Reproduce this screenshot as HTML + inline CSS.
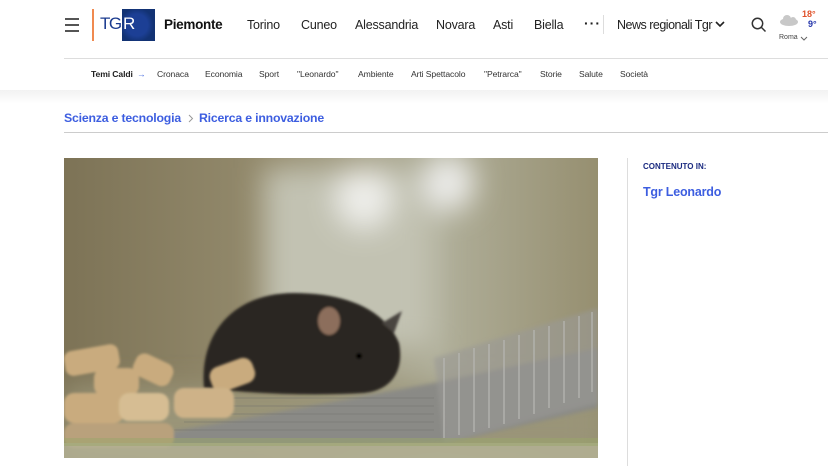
<!DOCTYPE html>
<html><head><meta charset="utf-8"><style>
*{margin:0;padding:0;box-sizing:border-box}
body{width:828px;height:466px;overflow:hidden;background:#fff;font-family:"Liberation Sans",sans-serif;position:relative;color:#1f1f1f}
.a{position:absolute;white-space:nowrap}
.nav{font-size:12.5px;top:18px;color:#222;letter-spacing:-0.2px}
.sub{font-size:8.6px;top:69px;color:#333;letter-spacing:-0.1px}
</style></head><body>
<div class="a" style="left:65px;top:18px;width:14px;height:2px;background:#555"></div>
<div class="a" style="left:65px;top:24px;width:14px;height:2px;background:#555"></div>
<div class="a" style="left:65px;top:30px;width:14px;height:2px;background:#555"></div>
<div class="a" style="left:92px;top:9px;width:2px;height:32px;background:#f08a50"></div>
<div class="a" style="left:100px;top:14px;font-size:17px;color:#1b3b8f;letter-spacing:-1.5px">TG</div>
<div class="a" style="left:122px;top:9px;width:33px;height:32px;background:radial-gradient(circle at 45% 50%,#1c3f95 0,#1c3f95 45%,#123273 70%)"></div>
<div class="a" style="left:123px;top:14px;font-size:17px;color:#fff">R</div>
<div class="a" style="left:164px;top:17px;font-size:13.5px;font-weight:bold;color:#111;letter-spacing:-0.3px">Piemonte</div>
<div class="a nav" style="left:247px">Torino</div>
<div class="a nav" style="left:301px">Cuneo</div>
<div class="a nav" style="left:355px">Alessandria</div>
<div class="a nav" style="left:436px">Novara</div>
<div class="a nav" style="left:493px">Asti</div>
<div class="a nav" style="left:534px">Biella</div>
<div class="a" style="left:584px;top:15px;font-size:14px;font-weight:bold;letter-spacing:1px">···</div>
<div class="a" style="left:603px;top:15px;width:1px;height:19px;background:#ddd"></div>
<div class="a nav" style="left:617px;letter-spacing:-0.5px">News regionali Tgr</div>
<svg class="a" style="left:715px;top:21px" width="10" height="7"><path d="M1 1l4 4 4-4" stroke="#222" stroke-width="1.6" fill="none"/></svg>
<svg class="a" style="left:751px;top:17px" width="16" height="16"><circle cx="6.5" cy="6.5" r="5.2" stroke="#333" stroke-width="1.5" fill="none"/><path d="M10.5 10.5l4 4" stroke="#333" stroke-width="1.5"/></svg>
<svg class="a" style="left:778px;top:13px" width="22" height="14"><ellipse cx="11" cy="9" rx="9" ry="4" fill="#c8c8c8"/><circle cx="9" cy="6" r="4" fill="#c8c8c8"/><circle cx="15" cy="7" r="3" fill="#c8c8c8"/></svg>
<div class="a" style="left:802px;top:9px;font-size:9px;font-weight:bold;color:#e0522a">18°</div>
<div class="a" style="left:808px;top:19px;font-size:9px;font-weight:bold;color:#2233aa">9°</div>
<div class="a" style="left:779px;top:34px;font-size:7px;color:#444">Roma</div>
<svg class="a" style="left:800px;top:36px" width="8" height="5"><path d="M1 1l3 3 3-3" stroke="#666" fill="none"/></svg>
<div class="a" style="left:64px;top:58px;width:764px;height:1px;background:#ddd"></div>
<div class="a sub" style="left:91px;font-weight:bold;color:#222">Temi Caldi</div>
<div class="a sub" style="left:137px;color:#4a6ee0">→</div>
<div class="a sub" style="left:157px">Cronaca</div>
<div class="a sub" style="left:205px">Economia</div>
<div class="a sub" style="left:259px">Sport</div>
<div class="a sub" style="left:297px">"Leonardo"</div>
<div class="a sub" style="left:358px">Ambiente</div>
<div class="a sub" style="left:411px">Arti Spettacolo</div>
<div class="a sub" style="left:484px">"Petrarca"</div>
<div class="a sub" style="left:540px">Storie</div>
<div class="a sub" style="left:579px">Salute</div>
<div class="a sub" style="left:620px">Società</div>
<div class="a" style="left:0;top:90px;width:828px;height:14px;background:linear-gradient(#f2f2f2,#fff)"></div>
<div class="a" style="left:64px;top:111px;font-size:12.3px;font-weight:bold;color:#3d5ee0;letter-spacing:-0.2px">Scienza e tecnologia</div>
<svg class="a" style="left:188px;top:114px" width="6" height="9"><path d="M1 1l3.5 3.5L1 8" stroke="#999" fill="none"/></svg>
<div class="a" style="left:199px;top:111px;font-size:12.3px;font-weight:bold;color:#3d5ee0;letter-spacing:-0.2px">Ricerca e innovazione</div>
<div class="a" style="left:64px;top:132px;width:764px;height:1px;background:#ccc"></div>
<svg class="a" style="left:64px;top:158px" width="534" height="300" viewBox="0 0 534 300">
<defs>
<filter id="b" x="-20%" y="-20%" width="140%" height="140%"><feGaussianBlur stdDeviation="14"/></filter>
<filter id="s"><feGaussianBlur stdDeviation="2"/></filter>
<filter id="m"><feGaussianBlur stdDeviation="1.2"/></filter>
<linearGradient id="bg" x1="0" x2="1"><stop offset="0" stop-color="#7d7356"/><stop offset="0.4" stop-color="#958c6e"/><stop offset="0.7" stop-color="#b0af9a"/><stop offset="1" stop-color="#968f70"/></linearGradient>
</defs>
<rect width="534" height="300" fill="url(#bg)"/>
<g filter="url(#b)">
<rect x="200" y="10" width="170" height="180" fill="#c2c2b2"/>
<ellipse cx="300" cy="40" rx="28" ry="30" fill="#eeeeea"/>
<ellipse cx="385" cy="25" rx="25" ry="28" fill="#ececea"/>
<rect x="0" y="230" width="534" height="70" fill="#9a9478"/>
</g>
<polygon points="100,275 370,225 534,190 534,250 380,285 110,290" fill="#8a8a86" filter="url(#s)"/>
<polygon points="370,200 534,150 534,245 380,285" fill="#9a9995" opacity="0.6" filter="url(#s)"/>
<g stroke="#b8b8b4" stroke-width="1.5" opacity="0.8">
<path d="M380 200v80M395 195v82M410 190v84M425 186v84M440 182v84M455 177v84M470 172v84M485 168v82M500 163v82M515 158v82M528 154v80"/>
</g>
<g stroke="#6e6e6a" stroke-width="0.8" opacity="0.6">
<path d="M150 240h220M140 248h230M130 256h240M120 264h250M110 272h260"/>
</g>
<g filter="url(#m)">
<path d="M140 230 C135 175 170 135 230 135 C280 135 320 150 335 185 C340 210 330 232 300 235 C250 238 190 236 140 230Z" fill="#2a2520"/>
<ellipse cx="265" cy="163" rx="11" ry="14" fill="#8c6e5c"/>
<path d="M318 165l20-12-8 22z" fill="#4a4440"/>
<circle cx="295" cy="198" r="3" fill="#000"/>
</g>
<g fill="#c9ab7e" filter="url(#m)">
<rect x="0" y="190" width="55" height="25" rx="8" transform="rotate(-10 25 200)"/>
<rect x="30" y="210" width="45" height="28" rx="10"/>
<rect x="70" y="200" width="40" height="24" rx="9" transform="rotate(25 90 210)"/>
<rect x="0" y="235" width="60" height="30" rx="10"/>
<rect x="55" y="235" width="50" height="28" rx="10" fill="#d6bd93"/>
<rect x="145" y="205" width="45" height="26" rx="10" transform="rotate(-20 165 215)"/>
<rect x="110" y="230" width="60" height="30" rx="10" fill="#ceb288"/>
<rect x="0" y="265" width="110" height="25" rx="10" fill="#b9a17c"/>
</g>
<rect x="0" y="285" width="534" height="15" fill="#b3b094" opacity="0.85"/>
<rect x="0" y="280" width="534" height="8" fill="#9aa56a" opacity="0.5"/>
</svg>
<div class="a" style="left:627px;top:158px;width:1px;height:308px;background:#ddd"></div>
<div class="a" style="left:643px;top:162px;font-size:8px;font-weight:bold;color:#1a2a80">CONTENUTO IN:</div>
<div class="a" style="left:643px;top:185px;font-size:12.5px;font-weight:bold;color:#3d5ee0;letter-spacing:-0.2px">Tgr Leonardo</div>
</body></html>
